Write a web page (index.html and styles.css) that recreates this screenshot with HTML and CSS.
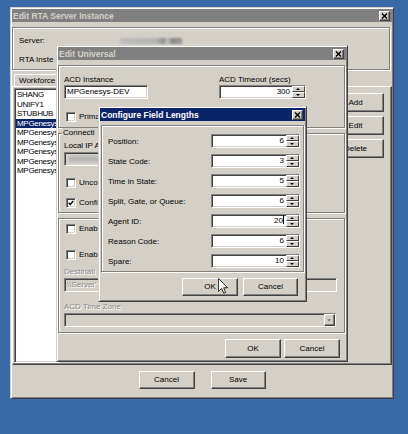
FILE: index.html
```html
<!DOCTYPE html>
<html>
<head>
<meta charset="utf-8">
<title>Configure Field Lengths</title>
<link rel="stylesheet" href="styles.css">
</head>
<body>
<div class="desk">

  <div class="win w1">
    <div class="title"><span>Edit RTA Server Instance</span><span class="close"><svg width="7" height="6" viewBox="0 0 7 6"><path d="M1 0.5 L6 5.5 M6 0.5 L1 5.5" stroke="#000" stroke-width="1.4"/></svg></span></div>
    <div class="etch info">
      <div class="irow"><span class="ilbl">Server:</span><span class="blurval"></span></div>
      <div class="irow"><span class="ilbl2">RTA Inste</span></div>
    </div>
    <div class="tabs"><span class="tab">Workforce</span></div>
    <div class="tabpanel">
      <ul class="list">
        <li>SHANG</li>
        <li>UNIFY1</li>
        <li>STUBHUB</li>
        <li class="sel">MPGenesys</li>
        <li>MPGenesys</li>
        <li>MPGenesys</li>
        <li>MPGenesys</li>
        <li>MPGenesys</li>
        <li>MPGenesys</li>
      </ul>
      <div class="sidebtns">
        <button class="btn side">Add</button>
        <button class="btn side">Edit</button>
        <button class="btn side">Delete</button>
      </div>
    </div>
    <div class="foot">
      <button class="btn b56">Cancel</button>
      <button class="btn b55">Save</button>
    </div>
  </div>

  <div class="win w2">
    <div class="title"><span>Edit Universal</span><span class="close"><svg width="7" height="6" viewBox="0 0 7 6"><path d="M1 0.5 L6 5.5 M6 0.5 L1 5.5" stroke="#000" stroke-width="1.4"/></svg></span></div>
    <div class="etch grp g1">
      <div class="toprow">
        <div class="col">
          <span class="lbl">ACD Instance</span>
          <div class="field acdinst">MPGenesys-DEV</div>
        </div>
        <div class="col col2">
          <span class="lbl">ACD Timeout (secs)</span>
          <div class="field spin timeout"><span class="v">300</span><span class="arr"><i class="up"></i><i class="dn"></i></span></div>
        </div>
      </div>
      <label class="chk c-prim"><span class="cb"></span><span>Prima</span></label>
    </div>
    <div class="etch grp g2">
      <span class="legend">Connecti</span>
      <span class="lbl">Local IP A</span>
      <div class="field dis localip"><span class="blurip"></span></div>
      <label class="chk c-unc"><span class="cb"></span><span>Unco</span></label>
      <label class="chk c-conf"><span class="cb on"><svg width="6" height="6" viewBox="0 0 7 7"><path d="M0.8 3.2 L2.6 5.2 L6.2 1.2" fill="none" stroke="#000" stroke-width="1.6"/></svg></span><span>Confi</span></label>
    </div>
    <div class="etch grp g3">
      <label class="chk c-en1"><span class="cb"></span><span>Enab</span></label>
      <label class="chk c-en2"><span class="cb"></span><span>Enab</span></label>
      <span class="lbl dtext l-dest">Destinati</span>
      <div class="field dis dest"><span class="dtext">\\Server'</span></div>
      <span class="lbl dtext l-tz">ACD Time Zone</span>
      <div class="field dis combo"><span class="ddbtn"><i></i></span></div>
    </div>
    <div class="btnrow w2btns">
      <button class="btn b56">OK</button>
      <button class="btn b56">Cancel</button>
    </div>
  </div>

  <div class="win w3">
    <div class="title active"><span>Configure Field Lengths</span><span class="close"><svg width="7" height="6" viewBox="0 0 7 6"><path d="M1 0.5 L6 5.5 M6 0.5 L1 5.5" stroke="#000" stroke-width="1.4"/></svg></span></div>
    <div class="etch fl">
      <div class="frow"><span>Position:</span><div class="field spin fspin"><span class="v">6</span><span class="arr"><i class="up"></i><i class="dn"></i></span></div></div>
      <div class="frow"><span>State Code:</span><div class="field spin fspin"><span class="v">3</span><span class="arr"><i class="up"></i><i class="dn"></i></span></div></div>
      <div class="frow"><span>Time in State:</span><div class="field spin fspin"><span class="v">5</span><span class="arr"><i class="up"></i><i class="dn"></i></span></div></div>
      <div class="frow"><span>Split, Gate, or Queue:</span><div class="field spin fspin"><span class="v">6</span><span class="arr"><i class="up"></i><i class="dn"></i></span></div></div>
      <div class="frow"><span>Agent ID:</span><div class="field spin fspin"><span class="v">20<span class="caret"></span></span><span class="arr"><i class="up"></i><i class="dn"></i></span></div></div>
      <div class="frow"><span>Reason Code:</span><div class="field spin fspin"><span class="v">6</span><span class="arr"><i class="up"></i><i class="dn"></i></span></div></div>
      <div class="frow"><span>Spare:</span><div class="field spin fspin"><span class="v">10</span><span class="arr"><i class="up"></i><i class="dn"></i></span></div></div>
    </div>
    <div class="btnrow w3btns">
      <button class="btn b56">OK</button>
      <button class="btn b55">Cancel</button>
    </div>
  </div>

  <svg class="cursor" width="10" height="16" viewBox="0 0 12 19"><path d="M0.5 0.5 V16 L4.3 12.3 L6.8 18.2 L9.2 17.2 L6.8 11.6 L11.5 11.6 Z" fill="#fff" stroke="#000" stroke-width="1"/></svg>
</div>
</body>
</html>
```
FILE: styles.css
```css
* { box-sizing: border-box; }
html, body { margin: 0; padding: 0; }
body {
  width: 408px;
  height: 434px;
  overflow: hidden;
  background: #3a6aa5;
  font-family: "Liberation Sans", Arial, sans-serif;
  font-size: 8px;
  color: #000;
}
.desk { position: relative; width: 408px; height: 434px; }

/* windows */
.win {
  position: absolute;
  display: flex;
  flex-direction: column;
  background: #d4d0c8;
  border: 1px solid;
  border-color: #d4d0c8 #404040 #404040 #d4d0c8;
  box-shadow: inset 1px 1px #fff, inset -1px -1px #808080;
  padding: 1px;
  overflow: hidden;
}
.w1 { left: 10px; top: 7px; width: 384px; height: 392px; }
.w2 { left: 56px; top: 45px; width: 292px; height: 317px; }
.w3 { left: 98px; top: 106px; width: 209px; height: 196px; }

.title {
  flex: none;
  height: 13px;
  display: flex;
  align-items: center;
  justify-content: space-between;
  padding: 0 2px 0 1px;
  background: #808080;
  color: #d4d0c8;
  font-weight: bold;
  font-size: 8.5px;
  white-space: nowrap;
}
.title.active { background: #0a246a; color: #fff; }
.close {
  width: 11px;
  height: 10px;
  display: flex;
  align-items: center;
  justify-content: center;
  background: #d4d0c8;
  border: 1px solid;
  border-color: #fff #404040 #404040 #fff;
  box-shadow: inset -1px -1px #808080;
}

/* common widgets */
.etch {
  border: 1px solid #808080;
  box-shadow: inset 1px 1px #fff, 1px 1px #fff;
}
.btn {
  font: inherit;
  font-size: 8px;
  color: #000;
  background: #d4d0c8;
  border: 1px solid;
  border-color: #fff #404040 #404040 #fff;
  box-shadow: inset -1px -1px #808080;
  padding: 0;
  height: 18px;
  line-height: 14px;
}
.b56 { width: 56px; }
.b55 { width: 55px; }
.field {
  height: 14px;
  background: #fff;
  border: 1px solid;
  border-color: #808080 #fff #fff #808080;
  box-shadow: inset 1px 1px #404040, inset -1px -1px #d4d0c8;
  line-height: 12px;
  padding: 0 2px;
  white-space: nowrap;
  overflow: hidden;
}
.field.dis { background: #d4d0c8; }
.lbl { display: block; height: 10px; line-height: 10px; white-space: nowrap; }
.dtext { color: #8a8a8a; text-shadow: 1px 1px #fff; }
.chk { display: flex; align-items: center; gap: 3px; height: 10px; line-height: 10px; margin-left: 2px; white-space: nowrap; }
.cb {
  width: 10px;
  height: 10px;
  flex: none;
  display: flex;
  align-items: center;
  justify-content: center;
  background: #fff;
  border: 1px solid;
  border-color: #808080 #fff #fff #808080;
  box-shadow: inset 1px 1px #404040, inset -1px -1px #d4d0c8;
}

/* spinner */
.spin { display: flex; padding: 0; }
.spin .v { flex: 1; text-align: right; padding-right: 2px; line-height: 12px; }
.arr { width: 13px; flex: none; display: flex; flex-direction: column; }
.arr i {
  flex: 1;
  position: relative;
  background: #d4d0c8;
  border: 1px solid;
  border-color: #fff #404040 #404040 #fff;
}
.arr i::after {
  content: "";
  position: absolute;
  left: 3px;
  top: 1px;
  border-left: 2.5px solid transparent;
  border-right: 2.5px solid transparent;
}
.arr i.up::after { border-bottom: 2px solid #000; }
.arr i.dn::after { border-top: 2px solid #000; }
.caret { display: inline-block; width: 1px; height: 9px; background: #000; vertical-align: -1px; }

/* window 1 */
.info { margin: 5px 2px 0 0; padding: 8px 5px 4px; display: flex; flex-direction: column; gap: 9px; }
.irow { display: flex; align-items: center; height: 10px; line-height: 10px; white-space: nowrap; }
.ilbl { width: 102px; padding-left: 1px; }
.ilbl2 { padding-left: 1px; }
.blurval {
  width: 62px;
  height: 6px;
  background: linear-gradient(90deg, #bdbdbd 0%, #b3b3b3 60%, #8c8c8c 70%, #c0c0c0 76%, #8a8a8a 84%, #999 100%);
  filter: blur(0.8px);
}
.tabs { margin-top: 4px; padding-left: 2px; height: 12px; display: flex; }
.tab {
  width: 46px;
  height: 12px;
  line-height: 11px;
  padding: 0 0 0 4px;
  background: #d4d0c8;
  border: 1px solid;
  border-bottom: none;
  border-right: none;
  border-color: #fff;
  white-space: nowrap;
}
.tabpanel {
  height: 279px;
  display: flex;
  padding: 1px;
  border: 1px solid;
  border-color: #fff #404040 #404040 #fff;
  box-shadow: inset -1px -1px #808080;
}
.list {
  margin: 0;
  padding: 1px 0 0 1px;
  list-style: none;
  width: 46px;
  background: #fff;
  border: 1px solid;
  border-color: #808080 #fff #fff #808080;
  box-shadow: inset 1px 1px #404040, inset -1px -1px #d4d0c8;
}
.list li { height: 9.5px; line-height: 9.5px; padding-left: 1px; white-space: nowrap; letter-spacing: -0.3px; }
.list li.sel { background: #0a246a; color: #fff; }
.sidebtns { margin: 5px 6px 0 auto; display: flex; flex-direction: column; gap: 4px; }
.btn.side { width: 57px; height: 19px; }
.foot { margin-top: 6px; display: flex; justify-content: center; gap: 16px; }

/* window 2 */
.grp { position: relative; margin-right: 1px; display: flex; flex-direction: column; }
.g1 { margin-top: 5px; padding: 9px 5px 5px; }
.toprow { display: flex; }
.col { display: flex; flex-direction: column; }
.col2 { margin-left: 71px; }
.acdinst { width: 84px; }
.timeout { width: 87px; }
.c-prim { margin-top: 13px; }
.g2 { margin-top: 5px; padding: 7px 5px 4px; }
.legend { position: absolute; left: 3px; top: -6px; white-space: nowrap; padding: 0 6px 0 1px; background: #d4d0c8; line-height: 10px; }
.localip { width: 100px; margin-top: 1px; display: flex; align-items: center; }
.blurip { width: 34px; height: 6px; margin-left: 2px; background: #b8b8b8; filter: blur(1px); }
.c-unc { margin-top: 12px; }
.c-conf { margin-top: 10px; }
.g3 { margin-top: 5px; padding: 5px 7px 5px 5px; }
.c-en2 { margin-top: 16px; }
.l-dest { margin-top: 7px; }
.dest { margin-top: 1px; }
.l-tz { margin-top: 10px; }
.combo { margin-top: 1px; margin-right: 1px; display: flex; justify-content: flex-end; padding: 0; }
.ddbtn {
  width: 11px;
  height: 12px;
  position: relative;
  background: #d4d0c8;
  border: 1px solid;
  border-color: #fff #404040 #404040 #fff;
  box-shadow: inset -1px -1px #808080;
}
.ddbtn i {
  position: absolute;
  left: 2px;
  top: 4px;
  border-left: 2.5px solid transparent;
  border-right: 2.5px solid transparent;
  border-top: 3px solid #8a8a8a;
}
.btnrow { display: flex; justify-content: flex-end; }
.w2btns { margin-top: 6px; padding-right: 6px; gap: 3px; }
.w2btns .btn { height: 19px; }

/* window 3 */
.fl { margin: 4px 1px 0; padding: 8px 3px 3px 6px; display: flex; flex-direction: column; gap: 6px; }
.frow { display: flex; align-items: center; justify-content: space-between; height: 14px; white-space: nowrap; }
.fspin { width: 89px; }
.w3btns { margin-top: 6px; padding-right: 7px; gap: 5px; }

.cursor { position: absolute; left: 218px; top: 278px; }
```
